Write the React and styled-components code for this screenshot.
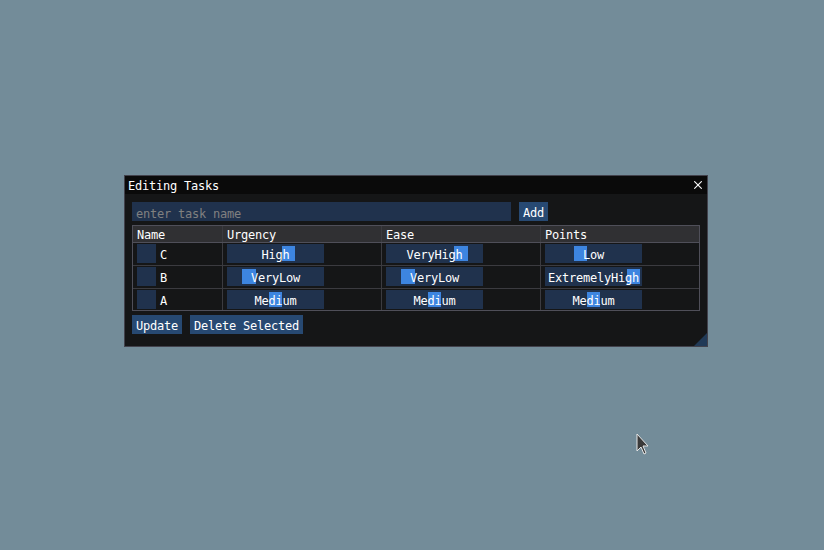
import React from 'react';
import styled, { createGlobalStyle } from 'styled-components';

const GlobalStyle = createGlobalStyle`
  html, body { margin: 0; padding: 0; }
  body {
    background: #738c99;
    font-family: "DejaVu Sans Mono", "Liberation Mono", monospace;
    font-size: 12px;
    letter-spacing: -0.225px;
    line-height: 13px;
    color: #ffffff;
  }
  * { box-sizing: border-box; }
`;

const LEVELS = ['None', 'VeryLow', 'Low', 'Medium', 'High', 'VeryHigh', 'ExtremelyHigh'];

const TASKS = [
  { name: 'C', urgency: 4, ease: 5, points: 2 },
  { name: 'B', urgency: 1, ease: 1, points: 6 },
  { name: 'A', urgency: 3, ease: 3, points: 3 },
];

const Desktop = styled.div`
  position: relative;
  width: 824px;
  height: 550px;
  overflow: hidden;
`;

const Window = styled.div`
  position: absolute;
  left: 124px;
  top: 175px;
  width: 584px;
  height: 172px;
  border: 1px solid #42424c;
  background: #151617;
  display: flex;
  flex-direction: column;
`;

const TitleBar = styled.div`
  height: 18px;
  flex: none;
  background: #0a0a0a;
  display: flex;
  align-items: flex-start;
  justify-content: space-between;
  padding: 4px 5px 0 3px;
`;

const TitleText = styled.span`
  white-space: pre;
`;

const CloseIcon = styled.svg`
  display: block;
  margin-top: 1px;
`;

const Content = styled.div`
  display: flex;
  flex-direction: column;
  gap: 4px;
  padding: 8px 7px 0;
`;

const Row = styled.div`
  display: flex;
  gap: 8px;
  align-items: flex-start;
`;

const TextInput = styled.input`
  width: 379px;
  height: 19px;
  border: none;
  outline: none;
  margin: 0;
  padding: 5px 4px 1px;
  background: #20324d;
  color: #ffffff;
  font: inherit;
  letter-spacing: inherit;
  line-height: 13px;
  &::placeholder { color: #808080; opacity: 1; }
`;

const Button = styled.div`
  height: 19px;
  padding: 5px 4px 1px;
  background: #274972;
  white-space: pre;
`;

const Table = styled.div`
  width: 568px;
  border: 1px solid #4f4f59;
  display: flex;
  flex-direction: column;
`;

const TableRow = styled.div`
  display: grid;
  grid-template-columns: 89px 159px 159px 159px;
  background: ${p => (p.$header ? '#303033' : 'transparent')};
  border-top: ${p => (p.$first ? 'none' : `1px solid ${p.$strong ? '#4f4f59' : '#3b3b40'}`)};
  padding: ${p => (p.$header ? '2px 0 0' : p.$last ? '1px 0 1px' : '1px 0 2px')};
`;

const Cell = styled.div`
  display: flex;
  align-items: flex-start;
  gap: 4px;
  padding-left: 4px;
  border-left: ${p => (p.$firstCol ? 'none' : '1px solid #3b3b40')};
  margin-top: ${p => (p.$header ? '-2px' : '-1px')};
  margin-bottom: ${p => (p.$header ? '0' : p.$last ? '-1px' : '-2px')};
  padding-top: ${p => (p.$header ? '2px' : '1px')};
  padding-bottom: ${p => (p.$header ? '0' : p.$last ? '1px' : '2px')};
`;

const HeaderLabel = styled.span`
  padding-top: 1px;
  white-space: pre;
`;

const Checkbox = styled.div`
  width: 19px;
  height: 19px;
  flex: none;
  background: #20324d;
`;

const NameText = styled.span`
  padding-top: 5px;
  white-space: pre;
`;

const SliderFrame = styled.div`
  position: relative;
  width: 97px;
  height: 19px;
  background: #20324d;
`;

const Grab = styled.div`
  position: absolute;
  top: 2px;
  width: 13.3px;
  height: 15px;
  background: #3d85e0;
`;

const SliderLabel = styled.div`
  position: relative;
  padding-top: 5px;
  text-align: center;
  white-space: pre;
`;

const ResizeGrip = styled.svg`
  position: absolute;
  right: 0;
  bottom: 0;
  display: block;
`;

const Cursor = styled.svg`
  position: absolute;
  left: 636px;
  top: 433px;
  display: block;
`;

function Slider({ value }) {
  const step = 93 / 7;
  return (
    <SliderFrame>
      <Grab style={{ left: `${2 + value * step}px` }} />
      <SliderLabel>{LEVELS[value]}</SliderLabel>
    </SliderFrame>
  );
}

export default function App() {
  return (
    <>
      <GlobalStyle />
      <Desktop>
        <Window>
          <TitleBar>
            <TitleText>Editing Tasks</TitleText>
            <CloseIcon width="8" height="8" viewBox="0 0 8 8">
              <line x1="0.3" y1="0.3" x2="7.7" y2="7.7" stroke="#ffffff" strokeWidth="1.1" />
              <line x1="7.7" y1="0.3" x2="0.3" y2="7.7" stroke="#ffffff" strokeWidth="1.1" />
            </CloseIcon>
          </TitleBar>
          <Content>
            <Row>
              <TextInput placeholder="enter task name" />
              <Button>Add</Button>
            </Row>
            <Table>
              <TableRow $header $first>
                {['Name', 'Urgency', 'Ease', 'Points'].map((h, i) => (
                  <Cell key={h} $header $firstCol={i === 0}>
                    <HeaderLabel>{h}</HeaderLabel>
                  </Cell>
                ))}
              </TableRow>
              {TASKS.map((t, idx) => {
                const last = idx === TASKS.length - 1;
                return (
                  <TableRow key={t.name} $strong={idx === 0} $last={last}>
                    <Cell $firstCol $last={last}>
                      <Checkbox />
                      <NameText>{t.name}</NameText>
                    </Cell>
                    <Cell $last={last}><Slider value={t.urgency} /></Cell>
                    <Cell $last={last}><Slider value={t.ease} /></Cell>
                    <Cell $last={last}><Slider value={t.points} /></Cell>
                  </TableRow>
                );
              })}
            </Table>
            <Row>
              <Button>Update</Button>
              <Button>Delete Selected</Button>
            </Row>
          </Content>
          <ResizeGrip width="13" height="13" viewBox="0 0 13 13">
            <polygon points="13,0 13,13 0,13" fill="#213a57" />
          </ResizeGrip>
        </Window>
        <Cursor width="14" height="22" viewBox="0 0 14 22">
          <polygon
            points="1,1 1,18 5,14 8,21 10,20 7,13 12,13"
            fill="#3a3a3a"
            stroke="#e6e6e6"
            strokeWidth="1"
            strokeLinejoin="miter"
          />
        </Cursor>
      </Desktop>
    </>
  );
}
